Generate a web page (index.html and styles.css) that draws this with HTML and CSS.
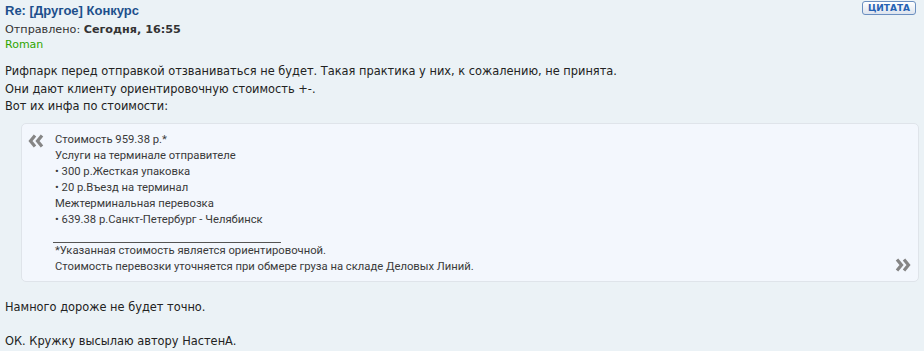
FILE: index.html
```html
<!DOCTYPE html>
<html lang="ru">
<head>
    <meta charset="UTF-8">
    <title>Re: [Другое] Конкурс</title>
    <link rel="stylesheet" href="styles.css">
</head>
<body>

<div class="post">
    <div class="post-head">
        <div>
            <h3 class="post-title">Re: [Другое] Конкурс</h3>
            <div class="post-date">Отправлено: <b>Сегодня, 16:55</b></div>
            <div class="post-author">Roman</div>
        </div>
        <a class="quote-btn" href="#">ЦИТАТА</a>
    </div>

    <div class="post-body">
        <p class="intro">Рифпарк перед отправкой отзваниваться не будет. Такая практика у них, к сожалению, не принята.<br>
        Они дают клиенту ориентировочную стоимость +-.<br>
        Вот их инфа по стоимости:</p>

        <div class="quote">
            <svg class="q-open" width="16" height="14" viewBox="0 0 16 14">
                <path d="M7 1.5 L2.5 7 L7 12.5 M14 1.5 L9.5 7 L14 12.5" fill="none" stroke="#858585" stroke-width="3.2"/>
            </svg>
            <div class="quote-text">
                Стоимость 959.38 р.*<br>
                Услуги на терминале отправителе<br>
                &bull; 300 р.Жесткая упаковка<br>
                &bull; 20 р.Въезд на терминал<br>
                Межтерминальная перевозка<br>
                &bull; 639.38 р.Санкт-Петербург - Челябинск<br>
                <div class="q-rule"></div>
                *Указанная стоимость является ориентировочной.<br>
                Стоимость перевозки уточняется при обмере груза на складе Деловых Линий.
            </div>
            <svg class="q-close" width="16" height="14" viewBox="0 0 16 14">
                <path d="M2 1.5 L6.5 7 L2 12.5 M9 1.5 L13.5 7 L9 12.5" fill="none" stroke="#858585" stroke-width="3.2"/>
            </svg>
        </div>

        <p class="last">Намного дороже не будет точно.</p>
        <p class="last">ОК. Кружку высылаю автору НастенА.</p>
    </div>
</div>

</body>
</html>
```

FILE: styles.css
```css
body {
    margin: 0;
    background: #fff;
    font-family: "DejaVu Sans", Verdana, sans-serif;
    font-size: 11.4px;
    color: #222;
}
.post {
    background: #ebf2f6;
    padding: 2px 5px 0 5px;
}
.post-head {
    display: flex;
    justify-content: space-between;
    align-items: flex-start;
}
.post-title {
    margin: 0;
    font-family: "Liberation Sans", Arial, sans-serif;
    font-size: 13px;
    color: #1d4f8c;
    line-height: 18px;
}
.post-date {
    font-size: 11.2px;
    color: #333;
    line-height: 15px;
    margin-top: 2px;
}
.post-author {
    font-size: 11px;
    color: #2ea500;
    line-height: 15px;
}
.quote-btn {
    margin: -1px 3px 0 0;
    padding: 0 5px;
    font-size: 9px;
    font-weight: bold;
    line-height: 12px;
    color: #2462b4;
    text-decoration: none;
    border: 1px solid #6b8fc0;
    border-radius: 3px;
    background: linear-gradient(#fff, #dde4ee);
}
.post-body p {
    margin: 0;
    line-height: 17.5px;
}
.post-body .intro {
    margin-top: 11px;
}
.quote {
    display: flex;
    align-items: flex-start;
    margin: 7px 0 17px 16px;
    background: #f3f7fd;
    border: 1px solid #dfe4ea;
    border-radius: 5px;
    padding: 8px 7px 6px 6px;
    font-family: Roboto, sans-serif;
    font-size: 11.25px;
    line-height: 16px;
    color: #3a3a3a;
}
.q-open {
    flex: none;
    margin: 2px 11px 0 0;
}
.q-close {
    flex: none;
    align-self: flex-end;
    margin-bottom: 3px;
}
.quote-text {
    flex: 1;
}
.q-rule {
    width: 228px;
    border-top: 1px solid #555;
    margin: 14px 0 0 -2px;
}
.post-body .last {
    margin-bottom: 17px;
}
.post-body .last:last-child {
    margin-bottom: 0;
}
```
